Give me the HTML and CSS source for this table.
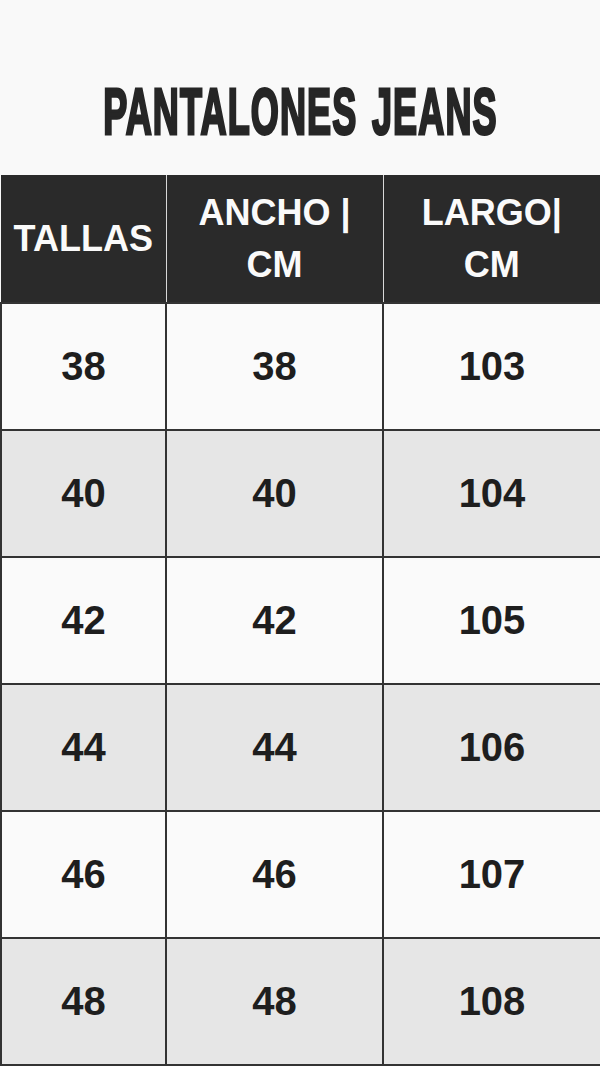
FILE: index.html
```html
<!DOCTYPE html>
<html lang="es">
<head>
<meta charset="utf-8">
<title>Pantalones Jeans</title>
<link rel="stylesheet" href="styles.css">
</head>
<body>
<header class="title-block">
  <h1 class="title">PANTALONES JEANS</h1>
</header>
<table class="sizes">
  <colgroup>
    <col class="c1"><col class="c2"><col class="c3">
  </colgroup>
  <thead>
    <tr><th>TALLAS</th><th>ANCHO |<br>CM</th><th>LARGO|<br>CM</th></tr>
  </thead>
  <tbody>
    <tr><td>38</td><td>38</td><td>103</td></tr>
    <tr class="alt"><td>40</td><td>40</td><td>104</td></tr>
    <tr><td>42</td><td>42</td><td>105</td></tr>
    <tr class="alt"><td>44</td><td>44</td><td>106</td></tr>
    <tr><td>46</td><td>46</td><td>107</td></tr>
    <tr class="alt"><td>48</td><td>48</td><td>108</td></tr>
  </tbody>
</table>
</body>
</html>
```
FILE: styles.css
```css
html, body {
  margin: 0;
  padding: 0;
  background: #f9f9f9;
}
body {
  width: 600px;
  height: 1066px;
  overflow: hidden;
  font-family: "Liberation Sans", Arial, sans-serif;
  color: #202020;
}
.title-block {
  height: 128px;
  padding-top: 47px;
  display: flex;
  align-items: center;
  justify-content: center;
}
.title {
  margin: 0;
  font-family: "Liberation Sans Narrow", "Liberation Sans", sans-serif;
  font-weight: 700;
  font-size: 65px;
  line-height: 1;
  color: #262626;
  white-space: nowrap;
  transform: scaleX(0.555);
  -webkit-text-stroke: 3px #262626;
  letter-spacing: 2px;
  word-spacing: 6px;
}
.sizes {
  width: 600px;
  table-layout: fixed;
  border-collapse: collapse;
}
.c1 { width: 165px; }
.c2 { width: 217px; }
.c3 { width: 218px; }
.sizes th {
  height: 127px;
  padding: 0;
  background: #2a2a2a;
  color: #fafafa;
  font-size: 36px;
  font-weight: 700;
  line-height: 52px;
  text-align: center;
  border-right: 1px solid #d8d8d8;
}
.sizes th:last-child { border-right: 2px solid #2a2a2a; }
.sizes td {
  height: 125px;
  padding: 0;
  border: 2px solid #333;
  background: #fafafa;
  text-align: center;
  font-size: 40px;
  font-weight: 700;
  color: #1e1e1e;
}
.sizes tr.alt td { background: #e6e6e6; }
```
